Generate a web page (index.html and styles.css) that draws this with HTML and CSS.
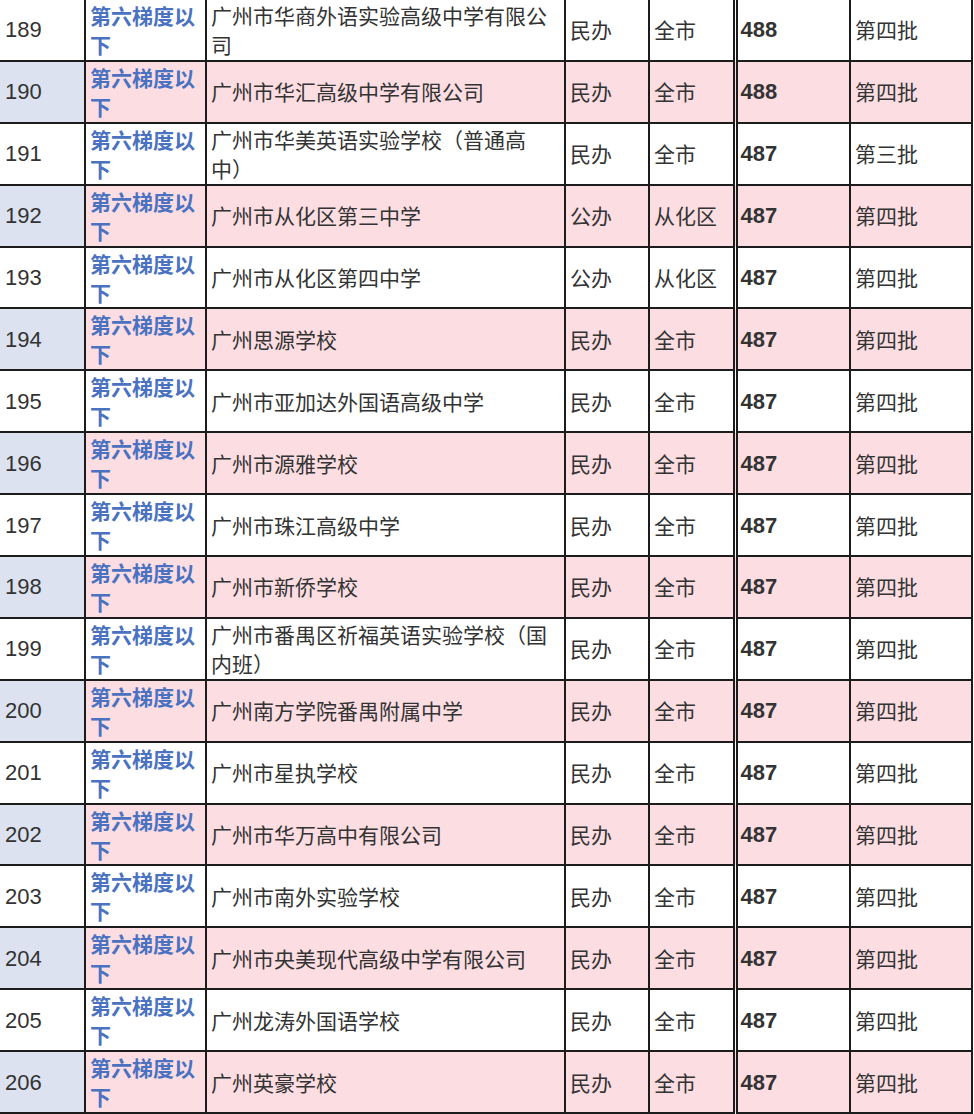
FILE: index.html
```html
<!DOCTYPE html>
<html lang="zh-CN">
<head>
<meta charset="utf-8">
<title>录取分数表</title>
<link rel="stylesheet" href="styles.css">
</head>
<body>
<table class="score-table">
  <colgroup>
    <col class="c-rank">
    <col class="c-tier">
    <col class="c-school">
    <col class="c-type">
    <col class="c-area">
    <col class="c-score">
    <col class="c-batch">
  </colgroup>
  <tbody>
    <tr><td class="rank">189</td><td class="tier">第六梯度以下</td><td>广州市华商外语实验高级中学有限公司</td><td>民办</td><td>全市</td><td class="score">488</td><td>第四批</td></tr>
    <tr class="alt"><td class="rank">190</td><td class="tier">第六梯度以下</td><td>广州市华汇高级中学有限公司</td><td>民办</td><td>全市</td><td class="score">488</td><td>第四批</td></tr>
    <tr><td class="rank">191</td><td class="tier">第六梯度以下</td><td>广州市华美英语实验学校（普通高中）</td><td>民办</td><td>全市</td><td class="score">487</td><td>第三批</td></tr>
    <tr class="alt"><td class="rank">192</td><td class="tier">第六梯度以下</td><td>广州市从化区第三中学</td><td>公办</td><td>从化区</td><td class="score">487</td><td>第四批</td></tr>
    <tr><td class="rank">193</td><td class="tier">第六梯度以下</td><td>广州市从化区第四中学</td><td>公办</td><td>从化区</td><td class="score">487</td><td>第四批</td></tr>
    <tr class="alt"><td class="rank">194</td><td class="tier">第六梯度以下</td><td>广州思源学校</td><td>民办</td><td>全市</td><td class="score">487</td><td>第四批</td></tr>
    <tr><td class="rank">195</td><td class="tier">第六梯度以下</td><td>广州市亚加达外国语高级中学</td><td>民办</td><td>全市</td><td class="score">487</td><td>第四批</td></tr>
    <tr class="alt"><td class="rank">196</td><td class="tier">第六梯度以下</td><td>广州市源雅学校</td><td>民办</td><td>全市</td><td class="score">487</td><td>第四批</td></tr>
    <tr><td class="rank">197</td><td class="tier">第六梯度以下</td><td>广州市珠江高级中学</td><td>民办</td><td>全市</td><td class="score">487</td><td>第四批</td></tr>
    <tr class="alt"><td class="rank">198</td><td class="tier">第六梯度以下</td><td>广州市新侨学校</td><td>民办</td><td>全市</td><td class="score">487</td><td>第四批</td></tr>
    <tr><td class="rank">199</td><td class="tier">第六梯度以下</td><td>广州市番禺区祈福英语实验学校（国内班）</td><td>民办</td><td>全市</td><td class="score">487</td><td>第四批</td></tr>
    <tr class="alt"><td class="rank">200</td><td class="tier">第六梯度以下</td><td>广州南方学院番禺附属中学</td><td>民办</td><td>全市</td><td class="score">487</td><td>第四批</td></tr>
    <tr><td class="rank">201</td><td class="tier">第六梯度以下</td><td>广州市星执学校</td><td>民办</td><td>全市</td><td class="score">487</td><td>第四批</td></tr>
    <tr class="alt"><td class="rank">202</td><td class="tier">第六梯度以下</td><td>广州市华万高中有限公司</td><td>民办</td><td>全市</td><td class="score">487</td><td>第四批</td></tr>
    <tr><td class="rank">203</td><td class="tier">第六梯度以下</td><td>广州市南外实验学校</td><td>民办</td><td>全市</td><td class="score">487</td><td>第四批</td></tr>
    <tr class="alt"><td class="rank">204</td><td class="tier">第六梯度以下</td><td>广州市央美现代高级中学有限公司</td><td>民办</td><td>全市</td><td class="score">487</td><td>第四批</td></tr>
    <tr><td class="rank">205</td><td class="tier">第六梯度以下</td><td>广州龙涛外国语学校</td><td>民办</td><td>全市</td><td class="score">487</td><td>第四批</td></tr>
    <tr class="alt"><td class="rank">206</td><td class="tier">第六梯度以下</td><td>广州英豪学校</td><td>民办</td><td>全市</td><td class="score">487</td><td>第四批</td></tr>
  </tbody>
</table>
</body>
</html>
```

FILE: styles.css
```css
html, body {
  margin: 0;
  padding: 0;
  background: #ffffff;
}

body {
  font-family: "Liberation Sans", "Noto Sans CJK SC", sans-serif;
  color: #333333;
  overflow: hidden;
}

.score-table {
  border-collapse: collapse;
  table-layout: fixed;
  width: 973px;
  margin: -2px 0 0 -2px;
  font-size: 21px;
}

.c-rank { width: 86px; }
.c-tier { width: 121px; }
.c-school { width: 359px; }
.c-type { width: 84px; }
.c-area { width: 86px; }
.c-score { width: 115px; }
.c-batch { width: 122px; }

.score-table tr {
  height: 61.9px;
}

.score-table td {
  border: 2px solid #1c1c1c;
  padding: 0 4px;
  line-height: 29px;
  vertical-align: middle;
  text-align: left;
  font-family: "Noto Sans CJK SC", sans-serif;
  text-spacing-trim: space-all;
  letter-spacing: 0;
}

.score-table td.rank {
  font-family: "Liberation Sans", "Noto Sans CJK SC", sans-serif;
  font-size: 22px;
  padding-left: 5px;
}

.score-table td.tier {
  color: #4a72c0;
  font-weight: 700;
  padding-left: 4px;
}

.score-table td.score {
  font-family: "Liberation Sans", "Noto Sans CJK SC", sans-serif;
  font-size: 22px;
  font-weight: 700;
  border-left: 5px double #1c1c1c;
  padding-left: 3px;
}

.score-table tr.alt td {
  background: #fcdde2;
}

.score-table tr.alt td.rank {
  background: #dce2ef;
}
```
